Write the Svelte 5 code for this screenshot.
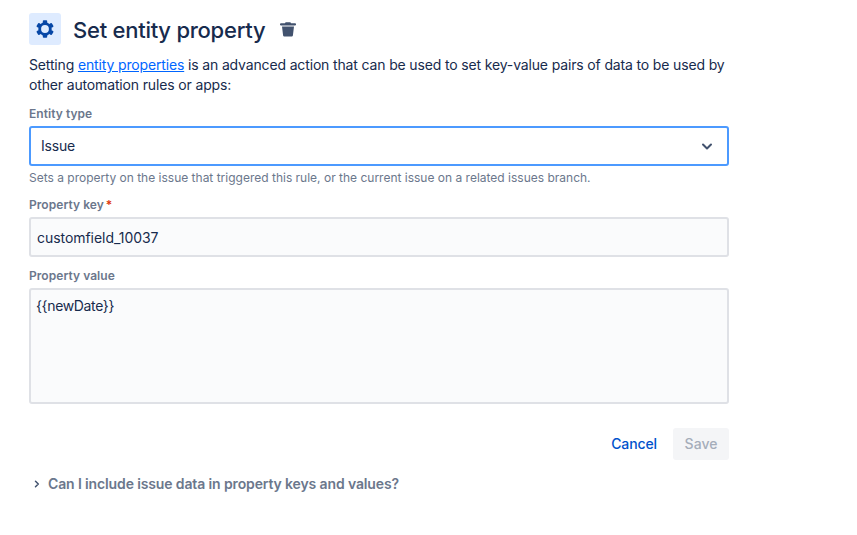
<script lang="ts">
  let entityType = "Issue"
  let propertyKey = "customfield_10037"
  let propertyValue = "{{newDate}}"
</script>

<main>
  <header>
    <div class="action-icon">
      <svg width="20" height="20" viewBox="0 0 24 24" fill="none">
        <circle cx="12" cy="12" r="6.4" stroke="#0747a6" stroke-width="3.4" />
        <g fill="#0747a6">
          <rect x="9.4" y="1.4" width="5.2" height="4" rx="1" />
          <rect x="9.4" y="18.6" width="5.2" height="4" rx="1" />
          <rect x="9.4" y="1.4" width="5.2" height="4" rx="1" transform="rotate(60 12 12)" />
          <rect x="9.4" y="1.4" width="5.2" height="4" rx="1" transform="rotate(120 12 12)" />
          <rect x="9.4" y="1.4" width="5.2" height="4" rx="1" transform="rotate(240 12 12)" />
          <rect x="9.4" y="1.4" width="5.2" height="4" rx="1" transform="rotate(300 12 12)" />
        </g>
      </svg>
    </div>
    <h1>Set entity property</h1>
    <button class="delete" aria-label="Delete">
      <svg width="16" height="16" viewBox="0 0 16 16" fill="#42526e">
        <path d="M5.6 1.2h4.8l.6 1H15a.7.7 0 0 1 0 2.2H1a.7.7 0 0 1 0-2.2h4z" />
        <path d="M2 5.4h12l-1.1 9a1.2 1.2 0 0 1-1.2 1H4.3a1.2 1.2 0 0 1-1.2-1z" />
      </svg>
    </button>
  </header>

  <p class="intro">
    Setting <a href="#top">entity properties</a> is an advanced action that can be used to set key-value pairs of data to be used by other automation rules or apps:
  </p>

  <label class="field-label" for="entity-type">Entity type</label>
  <div class="select" id="entity-type">
    <span>{entityType}</span>
    <svg width="24" height="24" viewBox="0 0 24 24" fill="none">
      <path d="M8 10.5l4 4 4-4" stroke="#42526e" stroke-width="2" stroke-linecap="round" stroke-linejoin="round" />
    </svg>
  </div>
  <div class="help">Sets a property on the issue that triggered this rule, or the current issue on a related issues branch.</div>

  <label class="field-label" for="property-key">Property key<span class="req">*</span></label>
  <input id="property-key" bind:value={propertyKey} />

  <label class="field-label" for="property-value">Property value</label>
  <textarea id="property-value" bind:value={propertyValue}></textarea>

  <div class="actions">
    <button class="cancel">Cancel</button>
    <button class="save" disabled>Save</button>
  </div>

  <div class="expander">
    <svg width="16" height="16" viewBox="0 0 16 16" fill="none">
      <path d="M6.5 5.2l2.8 2.8-2.8 2.8" stroke="#42526e" stroke-width="1.5" stroke-linecap="round" stroke-linejoin="round" />
    </svg>
    <span>Can I include issue data in property keys and values?</span>
  </div>
</main>

<style>
  :global(body) {
    margin: 0;
    background: #fff;
    font-family: Inter, "Noto Sans", sans-serif;
    color: #172b4d;
  }

  main {
    width: 700px;
    padding: 13px 0 0 29px;
  }

  header {
    display: flex;
    align-items: center;
    height: 32px;
  }

  .action-icon {
    width: 32px;
    height: 32px;
    border-radius: 3px;
    background: #deebff;
    display: flex;
    align-items: center;
    justify-content: center;
  }

  h1 {
    margin: 2px 0 0 12px;
    font-size: 22px;
    font-weight: 500;
    line-height: 32px;
    letter-spacing: -0.25px;
    color: #172b4d;
  }

  .delete {
    margin-left: 15px;
    padding: 0;
    border: 0;
    background: none;
    display: flex;
  }

  .intro {
    margin: 10px 0 0;
    font-size: 14px;
    line-height: 20px;
    letter-spacing: -0.15px;
  }

  .intro a { color: #0065ff; text-decoration: underline; }

  .field-label {
    display: block;
    margin-top: 11px;
    font-size: 12px;
    font-weight: 600;
    line-height: 16px;
    letter-spacing: 0.05px;
    color: #6b778c;
  }

  .req { color: #de350b; margin-left: 2px; }

  .select {
    box-sizing: border-box;
    height: 40px;
    margin-top: 4px;
    padding: 0 8px 0 10px;
    border: 2px solid #4c9aff;
    border-radius: 3px;
    display: flex;
    align-items: center;
    justify-content: space-between;
    font-size: 14px;
    letter-spacing: -0.2px;
  }

  .select span { margin-top: -1px; }

  .help {
    margin-top: 4px;
    font-size: 12px;
    line-height: 16px;
    color: #6b778c;
  }

  input, textarea {
    display: block;
    box-sizing: border-box;
    width: 100%;
    margin-top: 4px;
    border: 2px solid #dfe1e6;
    border-radius: 3px;
    background: #fafbfc;
    color: #172b4d;
    font-family: inherit;
    font-size: 14px;
    line-height: 20px;
    outline: none;
  }

  input { height: 40px; padding: 0 6px; letter-spacing: -0.05px; }
  textarea { height: 116px; padding: 6px 5px; resize: none; letter-spacing: -0.35px; }

  .actions {
    display: flex;
    justify-content: flex-end;
    align-items: center;
    gap: 16px;
    margin-top: 24px;
  }

  .actions button {
    border: 0;
    border-radius: 3px;
    font-family: inherit;
    font-size: 14px;
    font-weight: 500;
    height: 32px;
    padding: 0 0 2px;
  }

  .cancel { background: none; color: #0052cc; letter-spacing: -0.1px; }
  .save { width: 56px; background: #f4f5f7; color: #a5adba; }

  .expander {
    display: flex;
    align-items: center;
    gap: 3px;
    margin-top: 16px;
    font-size: 14px;
    font-weight: 600;
    line-height: 16px;
    letter-spacing: -0.13px;
    color: #6b778c;
  }
</style>
